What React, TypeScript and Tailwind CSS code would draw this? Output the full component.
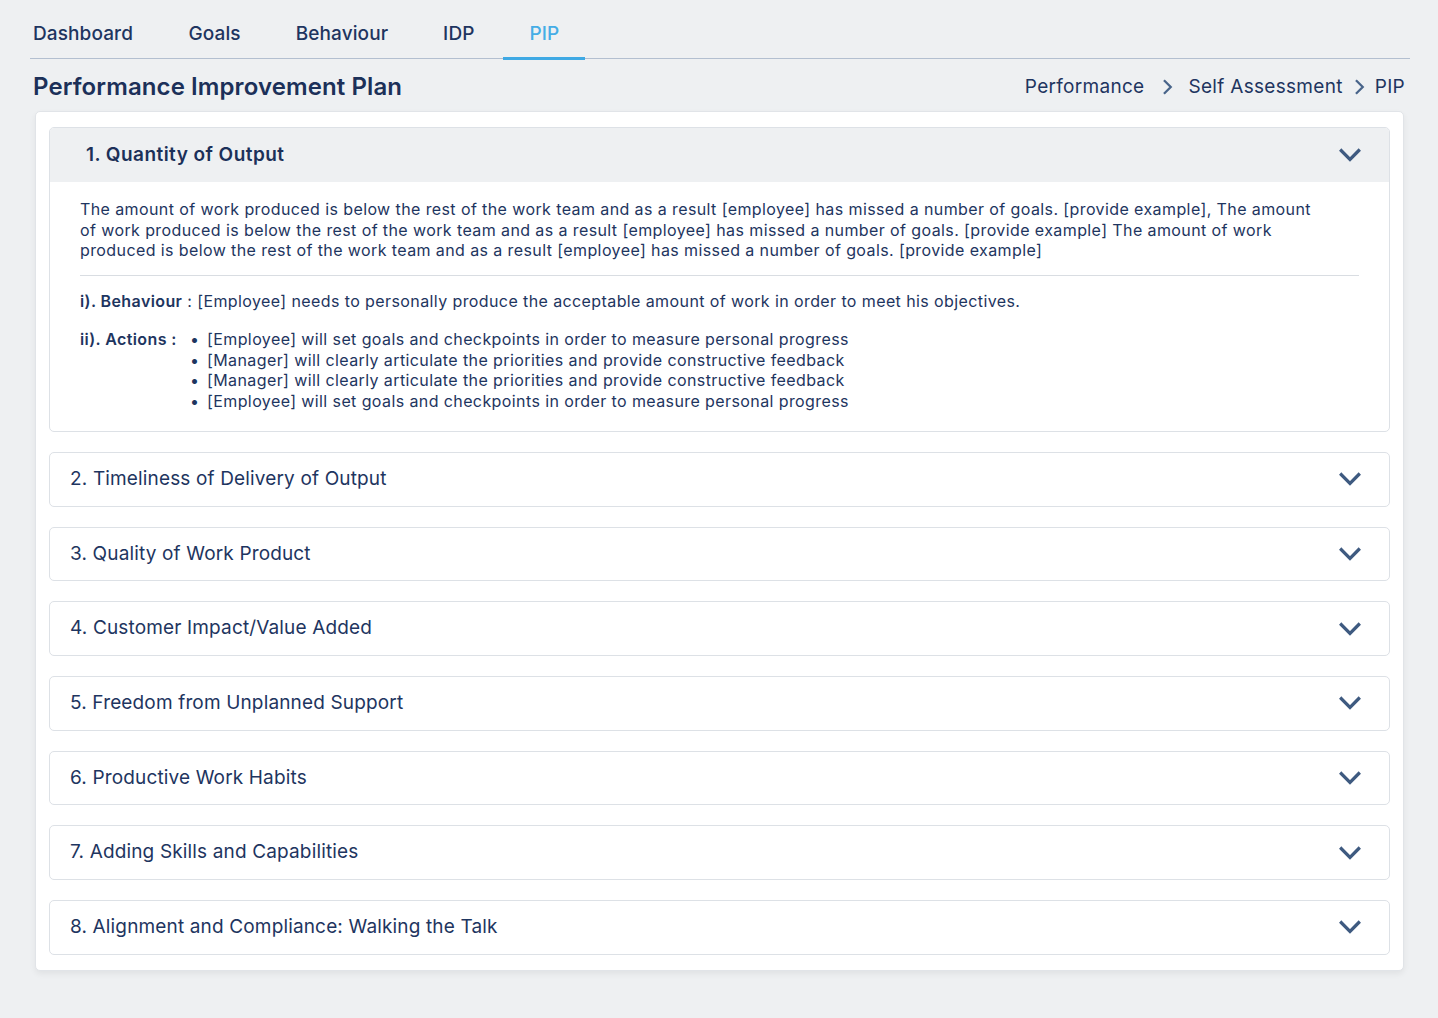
import React from 'react';

const tabs = ['Dashboard', 'Goals', 'Behaviour', 'IDP', 'PIP'];

const sections = [
  'Quantity of Output',
  'Timeliness of Delivery of Output',
  'Quality of Work Product',
  'Customer Impact/Value Added',
  'Freedom from Unplanned Support',
  'Productive Work Habits',
  'Adding Skills and Capabilities',
  'Alignment and Compliance: Walking the Talk',
];

const actions = [
  '[Employee] will set goals and checkpoints in order to measure personal progress',
  '[Manager] will clearly articulate the priorities and provide constructive feedback',
  '[Manager] will clearly articulate the priorities and provide constructive feedback',
  '[Employee] will set goals and checkpoints in order to measure personal progress',
];

const Chevron = ({ dir = 'down', className = '' }: { dir?: 'down' | 'right'; className?: string }) => (
  <svg
    viewBox="0 0 24 24"
    className={className}
    fill="none"
    stroke="currentColor"
    strokeWidth={3}
    strokeLinecap="square"
    strokeLinejoin="miter"
  >
    {dir === 'down' ? <path d="M4 8l8 8 8-8" /> : <path d="M9 4l8 8-8 8" />}
  </svg>
);

const App = () => {
  return (
    <div
      className="min-h-[1018px] bg-[#eef0f2] text-[#1e3560]"
      style={{ fontFamily: 'Inter, "Noto Sans", sans-serif' }}
    >
      {/* Tabs */}
      <div className="pt-[21px] pl-[30px] pr-[28px]">
        <div className="flex border-b border-[#b3bfd0] h-[38px]">
          {tabs.map((t, i) => (
            <div
              key={t}
              className={
                'relative flex items-start text-[19px] font-medium tracking-[0.1px] ' +
                (i === 0 ? 'pl-[3px] pr-[28px] ' : 'px-[27.5px] ') +
                (t === 'PIP' ? 'text-[#45ade6]' : 'text-[#1e3560]')
              }
            >
              <span className="leading-[26px]">{t}</span>
              {t === 'PIP' && (
                <span className="absolute left-[1px] right-[2px] bottom-[-2px] h-[3px] bg-[#3fa9e4]" />
              )}
            </div>
          ))}
        </div>
      </div>

      {/* Header */}
      <div className="flex items-center justify-between pl-[33px] pr-[33px] pt-[3px] h-[52px]">
        <h1 className="text-[24px] font-semibold leading-[30px] tracking-[0.1px] text-[#1c3059]">
          Performance Improvement Plan
        </h1>
        <div className="flex items-center text-[19px] leading-[26px] tracking-[0.3px] text-[#1e3560]">
          <span>Performance</span>
          <Chevron dir="right" className="w-[18px] h-[18px] mx-[13px] text-[#48648a]" />
          <span>Self Assessment</span>
          <Chevron dir="right" className="w-[18px] h-[18px] mx-[7px] text-[#48648a]" />
          <span>PIP</span>
        </div>
      </div>

      {/* Card */}
      <div className="ml-[35px] mr-[34px] bg-white rounded-[5px] border border-[#e1e4e8] shadow-[0_3px_6px_rgba(0,0,0,0.06)] px-[13px] pt-[15px] pb-[15px] flex flex-col gap-[20px]">
        {/* Expanded item */}
        <div className="border border-[#dde1e6] rounded-[5px] overflow-hidden">
          <div className="h-[54px] bg-[#eef0f2] flex items-center justify-between pl-[36px] pr-[26px]">
            <span className="text-[19px] font-semibold tracking-[0.45px] text-[#1c3059]">1. Quantity of Output</span>
            <Chevron className="w-[26px] h-[26px] text-[#3e5a80]" />
          </div>
          <div className="px-[30px] pt-[17px] pb-[20px] text-[16px] leading-[20.5px] tracking-[0.4px] text-[#1e3560]">
            <p className="pr-[40px]">
              The amount of work produced is below the rest of the work team and as a result [employee] has missed a
              number of goals. [provide example], The amount of work produced is below the rest of the work team and as
              a result [employee] has missed a number of goals. [provide example] The amount of work produced is below
              the rest of the work team and as a result [employee] has missed a number of goals. [provide example]
            </p>
            <div className="h-px bg-[#d9dde2] mt-[14px] mb-[15px]" />
            <p>
              <span className="font-semibold">i). Behaviour</span> : [Employee] needs to personally produce the
              acceptable amount of work in order to meet his objectives.
            </p>
            <div className="flex mt-[18px]">
              <span className="font-semibold w-[110px] shrink-0">ii). Actions :</span>
              <ul>
                {actions.map((a, i) => (
                  <li key={i} className="flex">
                    <span className="w-[17px] shrink-0">•</span>
                    <span>{a}</span>
                  </li>
                ))}
              </ul>
            </div>
          </div>
        </div>

        {sections.slice(1).map((s, i) => (
          <div
            key={s}
            className="h-[54.67px] border border-[#dde1e6] rounded-[5px] flex items-center justify-between pl-[20px] pr-[26px]"
          >
            <span className="text-[19px] tracking-[0.15px] text-[#1e3560]">
              {i + 2}. {s}
            </span>
            <Chevron className="w-[26px] h-[26px] text-[#3e5a80]" />
          </div>
        ))}
      </div>
    </div>
  );
};

export default App;
